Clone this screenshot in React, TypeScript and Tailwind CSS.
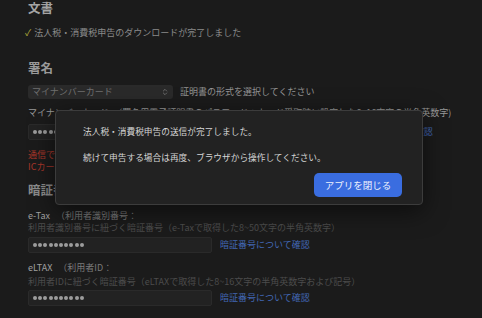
import { ChevronsUpDown } from "lucide-react";

const font = { fontFamily: '"Noto Sans CJK JP", "Noto Sans", sans-serif' };

function Dots() {
  return (
    <div className="flex items-center gap-[1.2px]">
      {Array.from({ length: 10 }).map((_, i) => (
        <span key={i} className="block w-[4px] h-[4px] rounded-full bg-[#9c9c9c]" />
      ))}
    </div>
  );
}

function PinRow({ link, width, top }: { link: string; width: string; top: string }) {
  return (
    <div className={`flex items-center ${top}`}>
      <div
        className={`${width} h-[16px] flex items-center pl-[4px] bg-[#222222] border border-[#2a2a2a] rounded-[2px]`}
      >
        <Dots />
      </div>
      <span className="ml-[8px] text-[9px] leading-[12px] text-[#4267b4]">{link}</span>
    </div>
  );
}

export default function App() {
  return (
    <div
      className="relative w-[482px] h-[318px] overflow-hidden bg-[#1b1b1b] pl-[28px] text-[9px] leading-[12px]"
      style={font}
    >
      {/* 文書 */}
      <h2 className="h-[16px] leading-[16px] text-[12.5px] font-bold text-[#a4a4a4]">文書</h2>
      <div className="mt-[11px] h-[12px] flex items-center -ml-[3px] text-[#8a8a8a]">
        <span className="text-[#b0aa3a] mr-[3px]">✓</span>
        法人税・消費税申告のダウンロードが完了しました
      </div>

      {/* 署名 */}
      <h2 className="mt-[21px] h-[16px] leading-[16px] text-[12.5px] font-bold text-[#9a9a9a]">署名</h2>
      <div className="mt-[9px] flex items-center">
        <div className="w-[145px] h-[14px] flex items-center justify-between px-[4px] bg-[#2a2a2a] rounded-[3px] text-[#707070]">
          マイナンバーカード
          <ChevronsUpDown size={8} strokeWidth={2} className="text-[#8a8a8a]" />
        </div>
        <span className="ml-[7px] text-[#949494]">証明書の形式を選択してください</span>
      </div>
      <div className="mt-[8px] h-[12px] whitespace-nowrap text-[#9a9a9a]">
        マイナンバーカード　（署名用電子証明書のパスワード：カード受取時に設定した6~16文字の半角英数字)
      </div>
      <PinRow link="パスワードについて確認" width="w-[298px]" top="mt-[5px]" />
      <div className="mt-[9px] text-[#a8362a] whitespace-nowrap">
        <div className="h-[12px]">通信でエラーが発生しました。カードリーダーの接続を確認してください。</div>
        <div className="h-[12px]">ICカードが正しく読み取れない場合は、再度お試しください。</div>
      </div>

      {/* 暗証番号 */}
      <h2 className="mt-[9px] h-[16px] leading-[16px] text-[12.5px] font-bold text-[#8c8c8c]">暗証番号</h2>
      <div className="mt-[12px] h-[12px] whitespace-nowrap">
        <span className="text-[#a0a0a0]">e-Tax</span>
        <span className="ml-[6px] text-[#7a7a7a]">（利用者識別番号：</span>
      </div>
      <div className="h-[12px] whitespace-nowrap text-[#4c4c4c]">
        利用者識別番号に紐づく暗証番号（e-Taxで取得した8~50文字の半角英数字）
      </div>
      <PinRow link="暗証番号について確認" width="w-[184px]" top="mt-[3px]" />
      <div className="mt-[9px] h-[12px] whitespace-nowrap">
        <span className="text-[#a0a0a0]">eLTAX</span>
        <span className="ml-[6px] text-[#7a7a7a]">（利用者ID：</span>
      </div>
      <div className="mt-[2px] h-[12px] whitespace-nowrap text-[#4c4c4c]">
        利用者IDに紐づく暗証番号（eLTAXで取得した8~16文字の半角英数字および記号）
      </div>
      <PinRow link="暗証番号について確認" width="w-[184px]" top="mt-[2px]" />

      {/* 完了ダイアログ */}
      <div className="absolute left-[55px] top-[110px] w-[368px] h-[95px] bg-[#222222] border border-[#3c3c3c] rounded-[4px] shadow-[0_6px_24px_rgba(0,0,0,0.55)] pl-[27px] pr-[20px] pt-[15px] text-[8.7px] leading-[12px] text-[#d6d6d6]">
        <p>法人税・消費税申告の送信が完了しました。</p>
        <p className="mt-[14px]">続けて申告する場合は再度、ブラウザから操作してください。</p>
        <div className="mt-[9px] flex justify-end">
          <button className="w-[88px] h-[24px] rounded-[5px] bg-[#3a6de0] text-[9.5px] text-[#eef2fd]">
            アプリを閉じる
          </button>
        </div>
      </div>
    </div>
  );
}
